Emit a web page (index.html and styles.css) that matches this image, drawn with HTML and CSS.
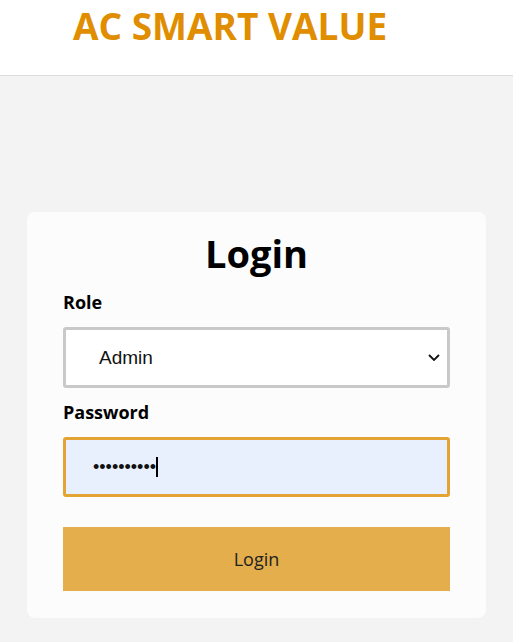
FILE: index.html
```html
<!DOCTYPE html>
<html lang="en">
<head>
    <title>AC Smart Value - Login</title>
    <meta name="viewport" content="width=device-width, initial-scale=1">
    <link rel="stylesheet" href="styles.css">
</head>
<body>
    <header class="top">
        <h1 class="brand">AC SMART VALUE</h1>
    </header>

    <main class="wrap">
        <form class="card" action="#">
            <h2 class="card-title">Login</h2>

            <label class="lbl" for="role">Role</label>
            <div class="sel">
                <select id="role" class="field">
                    <option>Admin</option>
                    <option>Staff</option>
                </select>
                <svg class="chev" width="12" height="7" viewBox="0 0 12 7"><path d="M1 1 6 6 11 1" fill="none" stroke="#111" stroke-width="1.8"/></svg>
            </div>

            <label class="lbl" for="pw">Password</label>
            <div class="field pw"><span class="dots">••••••••••</span><span class="caret"></span></div>

            <button class="btn" type="button">Login</button>
        </form>
    </main>
</body>
</html>
```

FILE: styles.css
```css
/* Colores */
:root {
    --orange: #e08e00;
    --gold: #e3ae4b;
    --bg: #f3f3f3;
}

html, body {
    margin: 0;
    padding: 0;
    background: var(--bg);
    font-family: "Open Sans", "Liberation Sans", sans-serif;
    color: #000;
}

/* Cabecera */
.top {
    background: #fff;
    height: 76px;
    border-bottom: 1px solid #dcdcdc;
    box-sizing: border-box;
}

.brand {
    margin: 0;
    padding-left: 73px;
    font-size: 37px;
    line-height: normal;
    font-weight: 700;
    color: var(--orange);
}

/* Tarjeta */
.wrap {
    padding: 136px 27px 24px;
}

.card {
    background: #fcfcfc;
    border-radius: 8px;
    padding: 16px 36px 27px;
    display: flex;
    flex-direction: column;
}

.card-title {
    margin: 0 0 12px;
    text-align: center;
    font-size: 38px;
    line-height: 50px;
    font-weight: 700;
}

.lbl {
    font-size: 18px;
    font-weight: 700;
    line-height: 24px;
    margin-bottom: 13px;
}

.sel {
    position: relative;
    margin-bottom: 12px;
}

.field {
    display: block;
    width: 100%;
    height: 61px;
    box-sizing: border-box;
    border: 3px solid #c9c9c9;
    border-radius: 3px;
    background: #fff;
    padding: 0 0 0 33px;
    font-family: "Liberation Sans", Arial, sans-serif;
    font-size: 19px;
    color: #111;
    appearance: none;
    outline: none;
}

.chev {
    position: absolute;
    right: 10px;
    top: 27px;
}

.pw {
    display: flex;
    align-items: center;
    height: 60px;
    background: #e8f0fe;
    border-color: #e3a433;
    padding-left: 27px;
    margin-bottom: 30px;
}

.dots {
    font-size: 18px;
    letter-spacing: 0;
}

.caret {
    width: 2px;
    height: 20px;
    background: #000;
    margin-left: 0;
}

.btn {
    height: 64px;
    border: none;
    background: var(--gold);
    font-family: "Open Sans", sans-serif;
    font-size: 18px;
    color: #222;
    cursor: pointer;
}
```
